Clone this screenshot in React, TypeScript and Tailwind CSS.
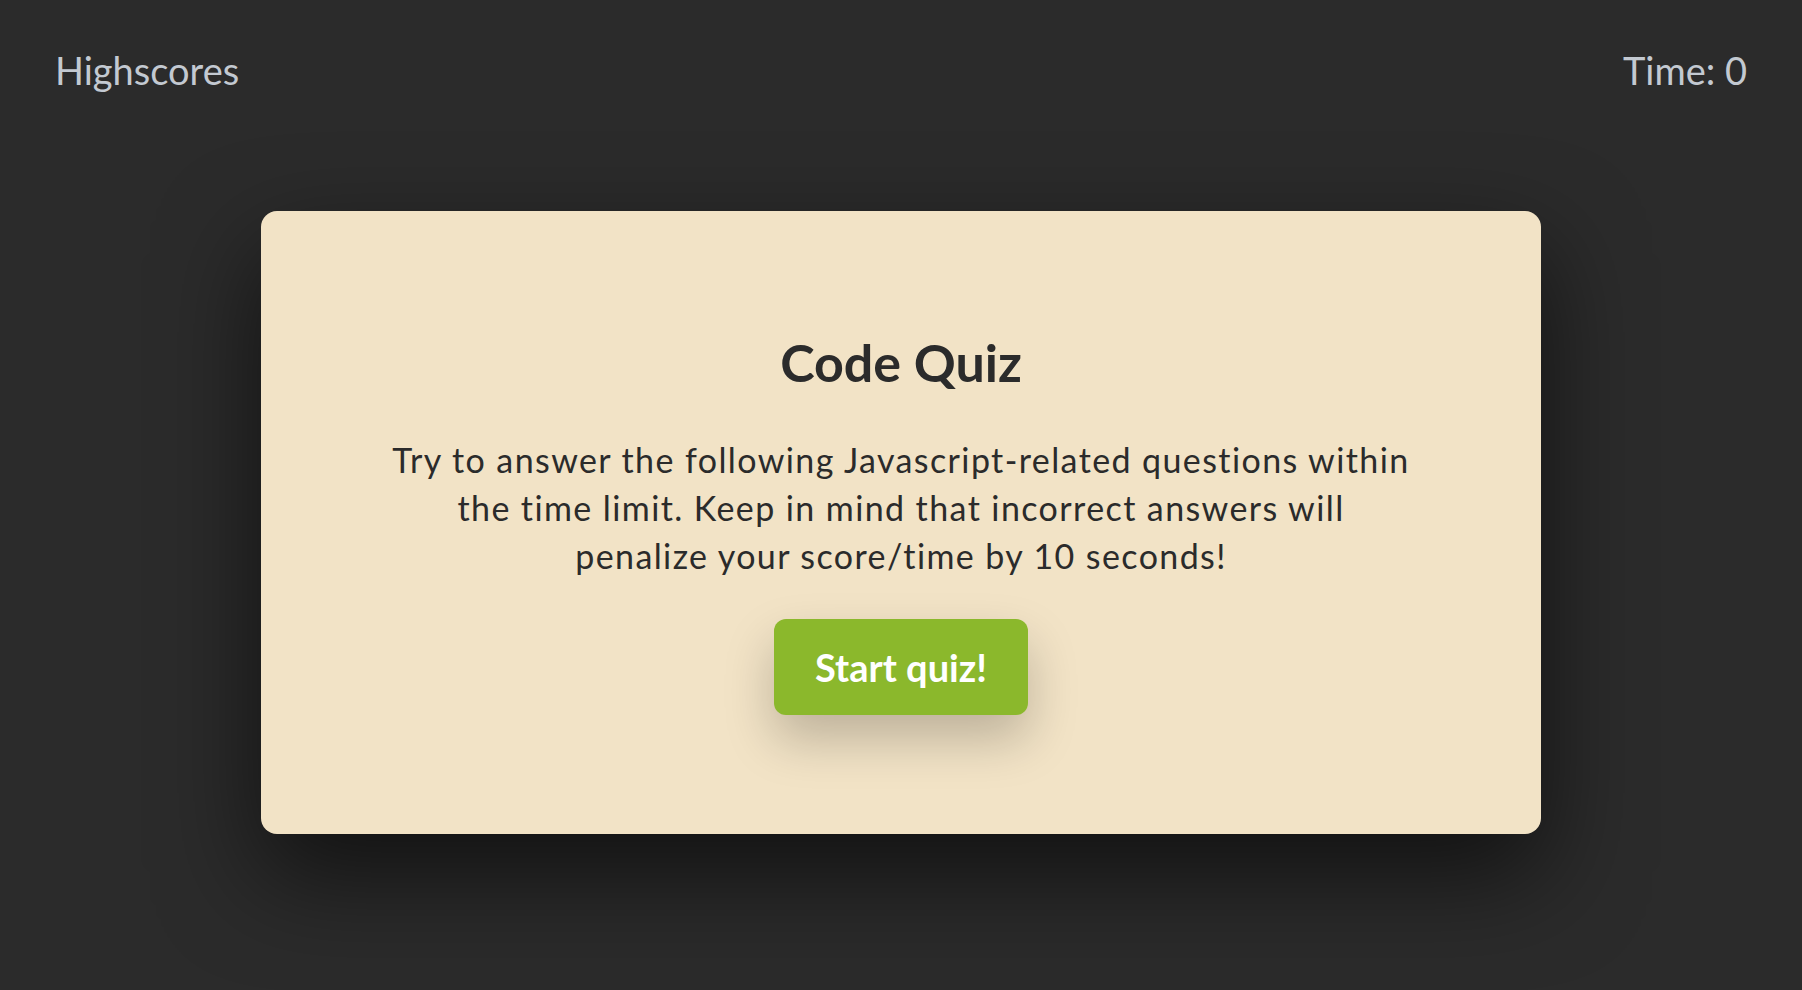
import React, { useState } from 'react';

export default function App() {
  const [time] = useState(0);

  return (
    <div className="min-h-[990px] bg-[#2b2b2b] font-['Lato','Liberation_Sans',sans-serif]">
      {/* Top bar */}
      <header className="flex justify-between px-[55px] pt-[51px] text-[38px] leading-none text-[#c3c9d1]">
        <a href="#" className="hover:text-white">Highscores</a>
        <span>Time: {time}</span>
      </header>

      {/* Start card */}
      <main className="flex justify-center pt-[122px]">
        <section className="w-[1280px] rounded-[16px] bg-[#f2e3c6] pt-[125px] pb-[119px] text-center text-[#2b2b2b] shadow-[0_40px_100px_rgba(0,0,0,0.6)]">
          <h1 className="text-[52px] leading-none font-bold">Code Quiz</h1>
          <p className="mt-[48px] text-[34px] leading-[48px] tracking-[1.4px]">
            Try to answer the following Javascript-related questions within
            <br />
            the time limit. Keep in mind that incorrect answers will
            <br />
            penalize your score/time by 10 seconds!
          </p>
          <button className="mt-[39px] h-[96px] w-[254px] rounded-[12px] bg-[#8bb82c] text-[38px] font-bold text-white shadow-[0_24px_50px_rgba(0,0,0,0.22)]">
            Start quiz!
          </button>
        </section>
      </main>
    </div>
  );
}
